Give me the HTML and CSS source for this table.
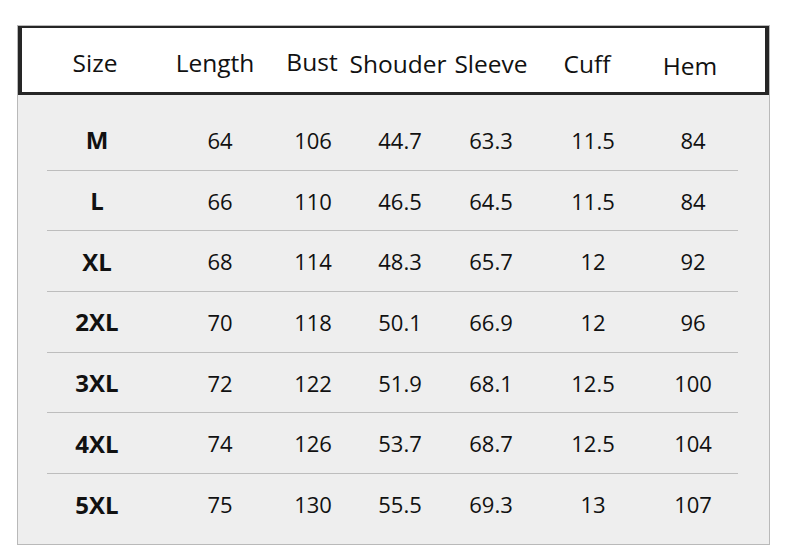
FILE: index.html
```html
<!DOCTYPE html>
<html>
<head>
<meta charset="utf-8">
<link rel="stylesheet" href="styles.css">
</head>
<body>
<div class="chart">
  <div class="head">
    <div class="hc">Size</div>
    <div class="hc">Length</div>
    <div class="hc up">Bust</div>
    <div class="hc dn">Shouder</div>
    <div class="hc dn">Sleeve</div>
    <div class="hc dn">Cuff</div>
    <div class="hc dn2">Hem</div>
  </div>
  <div class="body">
    <div class="row"><div class="c sz">M</div><div class="c">64</div><div class="c">106</div><div class="c">44.7</div><div class="c">63.3</div><div class="c">11.5</div><div class="c">84</div></div>
    <div class="row"><div class="c sz">L</div><div class="c">66</div><div class="c">110</div><div class="c">46.5</div><div class="c">64.5</div><div class="c">11.5</div><div class="c">84</div></div>
    <div class="row"><div class="c sz">XL</div><div class="c">68</div><div class="c">114</div><div class="c">48.3</div><div class="c">65.7</div><div class="c">12</div><div class="c">92</div></div>
    <div class="row"><div class="c sz">2XL</div><div class="c">70</div><div class="c">118</div><div class="c">50.1</div><div class="c">66.9</div><div class="c">12</div><div class="c">96</div></div>
    <div class="row"><div class="c sz">3XL</div><div class="c">72</div><div class="c">122</div><div class="c">51.9</div><div class="c">68.1</div><div class="c">12.5</div><div class="c">100</div></div>
    <div class="row"><div class="c sz">4XL</div><div class="c">74</div><div class="c">126</div><div class="c">53.7</div><div class="c">68.7</div><div class="c">12.5</div><div class="c">104</div></div>
    <div class="row last"><div class="c sz">5XL</div><div class="c">75</div><div class="c">130</div><div class="c">55.5</div><div class="c">69.3</div><div class="c">13</div><div class="c">107</div></div>
  </div>
</div>
</body>
</html>
```
FILE: styles.css
```css
html, body {
  margin: 0;
  padding: 0;
  background: #ffffff;
}
body {
  font-family: "Open Sans", "Noto Sans", sans-serif;
  color: #111111;
}
.chart {
  box-sizing: border-box;
  width: 753px;
  margin: 25px 0 0 17px;
  border: 1px solid #b9b9b9;
  background: #eeeeee;
}
.head {
  box-sizing: border-box;
  height: 69px;
  background: #ffffff;
  border-style: solid;
  border-color: #262626;
  border-width: 2px 4px 3px 4px;
  display: grid;
  grid-template-columns: 146px 94px 100px 72px 114px 78px 128px;
  align-items: center;
  font-size: 24.5px;
}
.hc {
  display: flex;
  justify-content: center;
  white-space: nowrap;
  padding-top: 5px;
}
.hc.up { padding-top: 2px; }
.hc.dn { padding-top: 7px; }
.hc.dn2 { padding-top: 10px; }
.body {
  box-sizing: border-box;
  height: 449px;
  padding: 15px 31px 0 29px;
}
.row {
  box-sizing: border-box;
  height: 60.7px;
  border-bottom: 1px solid #bdbdbd;
  display: flex;
  align-items: center;
  font-size: 22px;
}
.row.last {
  border-bottom: none;
}
.c {
  flex: 0 0 80px;
  display: flex;
  justify-content: center;
  white-space: nowrap;
}
.c:nth-child(1) { margin-left: 10px; }
.c:nth-child(2) { margin-left: 43px; }
.c:nth-child(3) { margin-left: 13px; }
.c:nth-child(4) { margin-left: 7px; }
.c:nth-child(5) { margin-left: 11px; }
.c:nth-child(6) { margin-left: 22px; }
.c:nth-child(7) { margin-left: 20px; }
.c.sz {
  font-weight: 700;
  font-size: 24px;
}
```
